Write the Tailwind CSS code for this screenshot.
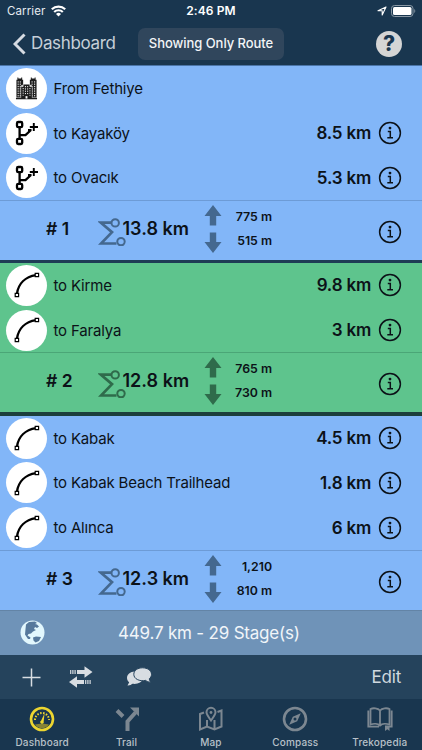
<!DOCTYPE html>
<html lang="en">
<head>
<meta charset="utf-8">
<title>Dashboard</title>
<script src="https://cdn.jsdelivr.net/npm/@tailwindcss/browser@4"></script>
</head>
<body class="w-[422px] h-[750px] overflow-hidden bg-[#19364f] font-['Inter','Liberation_Sans',sans-serif] antialiased">
<svg class="hidden">
  <symbol id="city" viewBox="0 0 24 24">
    <path d="M1.500 3.500h1V1h1v1h3V1h1v2.500h1V9H6.500v13h-5zM15.500 3.500h1V1h1v1h3V1h1v2.500h1V22h-5V9h-2z" fill="#1c1c1c"/>
    <path d="M3.300 5v16M5.500 5v16M17.800 5v16M20.500 5v16" stroke="#fff" stroke-width="1" stroke-dasharray="1.300 1.100"/>
    <path d="M6 10.500h2.500V8h7v2.500H18V23H6z" fill="#1c1c1c" stroke="#fff" stroke-width=".5"/>
    <path d="M8.500 12v8M10.900 10v9.500M13.200 10v9.500M15.600 12v8" stroke="#fff" stroke-width="1" stroke-dasharray="1.200 1.200"/>
    <path d="M1 23h22" stroke="#1c1c1c" stroke-width="1.500"/>
    <path d="M11 20.500h2V23h-2z" fill="#fff"/>
  </symbol>
  <symbol id="branch" viewBox="0 0 24 26">
    <g fill="none" stroke="#000" stroke-width="2.300">
      <rect x="2" y="2" width="5.200" height="5.200" rx="1.300"/><rect x="2" y="18.800" width="5.200" height="5.200" rx="1.300"/>
      <path d="M4.600 7v12M4.600 15.200H10.500l5.500-5.200M13 10.200h3.500"/><path d="M18.800 3v8M14.800 7h8.200" stroke-width="1.900"/>
    </g>
  </symbol>
  <symbol id="curve" viewBox="0 0 26 26">
    <path d="M3 21.500C4.500 12 11 4.800 22 3.200" fill="none" stroke="#000" stroke-width="2.300"/>
    <path d="M1.200 21.300h3.400v3.400H1.200zM21.200 1.300h3.400v3.400h-3.400z" fill="#fff" stroke="#000" stroke-width="1.200"/>
  </symbol>
  <symbol id="info" viewBox="0 0 24 24">
    <circle cx="12" cy="12" r="10.400" fill="none" stroke="currentColor" stroke-width="1.500"/>
    <path d="M9.800 10.400h2.500v6.300M9.300 16.800h5.700" fill="none" stroke="currentColor" stroke-width="1.500"/><circle cx="12" cy="7.100" r="1.400" fill="currentColor"/>
  </symbol>
  <symbol id="sigma" viewBox="0 0 28 28">
    <g fill="none" stroke="currentColor" stroke-width="2"><path d="M13.500 4.700H3L14 14.200 3 25.500H18.500" stroke-width="2.700"/><circle cx="17.200" cy="4.900" r="3.700"/><circle cx="23" cy="23.600" r="3.700"/></g>
  </symbol>
  <symbol id="up" viewBox="0 0 18 21"><path d="M9 0l8.500 11h-5.300v9.500H5.800V11H.5z" fill="currentColor"/></symbol>
</svg>

<header class="h-[66px] border-b border-[#4a75a8]">
  <div class="h-[22px] grid grid-cols-3 text-white text-[11.500px] leading-[22px]">
    <div class="flex items-center pl-[7px] gap-[6px]"><span class="tracking-[0.100px] text-[#e6ebef]">Carrier</span>
      <svg class="w-[15px] h-[12px]" viewBox="0 0 15 12"><g fill="none" stroke="#fff" stroke-width="2.200"><path d="M.8 4.300a9.500 9.500 0 0 1 13.400 0M3.200 7a6.100 6.100 0 0 1 8.600 0"/></g><path d="M7.500 11.500L5 8.900a3.600 3.600 0 0 1 5 0z" fill="#fff"/></svg></div>
    <div class="text-center font-semibold text-[12px] tracking-[0.100px]">2:46 PM</div>
    <div class="flex items-center justify-end pr-[6px] gap-[4px]">
      <svg class="w-[10px] h-[10px]" viewBox="0 0 10 10"><path d="M9 1L1 4.800h4.200V9z" fill="none" stroke="#fff" stroke-width="1.100" stroke-linejoin="round"/></svg>
      <svg class="w-[25px] h-[12px]" viewBox="0 0 25 12"><rect x=".5" y=".5" width="21.500" height="11" rx="3" fill="none" stroke="#8998a5"/><rect x="2" y="2" width="18.500" height="8" rx="1.500" fill="#fff"/><path d="M23.300 4v4c1.300-.5 1.300-3.500 0-4z" fill="#8998a5"/></svg>
    </div>
  </div>
  <div class="h-[43px] flex items-center pl-[13px] pr-[20px]">
    <svg class="w-[13px] h-[22px]" viewBox="0 0 13 22"><path d="M11.500 1.500L2 11l9.500 9.500" fill="none" stroke="#d6dbe2" stroke-width="3"/></svg>
    <span class="ml-[5px] w-[107px] text-[17px] tracking-[-0.350px] text-[#c6cfd8] whitespace-nowrap">Dashboard</span>
    <span class="w-[146px] h-[32px] rounded-[7px] bg-[#30465c] text-[#f3f5f7] text-[13px] tracking-[-0.050px] font-medium flex items-center justify-center whitespace-nowrap">Showing Only Route</span>
    <span class="ml-auto w-[26px] h-[26px] rounded-full bg-[#d5d5d5] text-[#19364f] text-[21px] font-extrabold flex items-center justify-center">?</span>
  </div>
</header>
<main id="list" class="h-[543.500px] bg-[#82b6f8] text-[#0c1218]"></main>
<section class="h-[45.500px] bg-[#6f93b8] border-t border-[#6384a6] flex items-center pl-[20px]">
  <svg class="w-[25px] h-[25px]" viewBox="0 0 25 25"><circle cx="12.500" cy="12.500" r="12" fill="#e2f7fd"/><path d="M6 4.500l3-2.500 6-.5 2 1.500-2 1 2 .5 2 2-2 1.500-2-1-1 2 2 1-3 1.500-2 2-2.500.5-1 1.500 1.500 1 1.500 1-.5 1.500H8L5 14.500 5.500 9zM13 17.500l3-1 5 .5-2 4-3.500 1.500-2-2z" fill="#56799c"/></svg>
  <span class="ml-[73px] pt-[2px] text-[17px] tracking-[-0.200px] text-[#f1f5f9] whitespace-nowrap">449.7 km - 29 Stage(s)</span>
</section>
<section class="h-[44px] bg-[#25435c] flex items-center pl-[22px] pr-[21px]">
  <svg class="w-[19px] h-[19px]" viewBox="0 0 19 19"><path d="M9.500 .5v18M.5 9.500h18" stroke="#d8dde2" stroke-width="1.500"/></svg>
  <svg class="ml-[27px] w-[25px] h-[22px]" viewBox="0 0 25 22" fill="#d8dde2"><path d="M9 4H16.500V.3l8 5.700-8 5.700V8H9zM16 14H9v-3.700L1 16l8 5.700V18h7z"/><path d="M2.700 4v4M4.900 4v4M7.100 4v4M17.700 14v4M19.900 14v4M22.100 14v4" stroke="#d8dde2" stroke-width="1.200"/></svg>
  <svg class="ml-[33px] w-[26px] h-[20px]" viewBox="0 0 26 20"><path d="M9 4.500C4 4.500 1 7.500 1 11c0 2 1 3.300 2.200 4.200L1.500 18.500c2 .2 4-.8 5-1.700 5 .8 9.500-1.500 10.500-5" fill="#d8dde2"/><path d="M16.500 .8c5 0 9 2.700 9 6.500 0 2-1 3.600-2.300 4.600l1.300 3.300c-2 0-3.700-.7-4.700-1.800-6.500 1.300-12-1.600-12-6.100 0-3.800 4-6.500 8.700-6.500z" fill="#d8dde2" stroke="#25435c"/></svg>
  <span class="ml-auto pt-[2px] text-[17px] tracking-[-0.200px] text-[#d0d8df]">Edit</span>
</section>
<nav class="h-[51px] bg-[#19364f] grid grid-cols-5 text-[10px] font-medium text-[#b8c1c9] leading-[12px] tracking-[0.150px]">
  <a class="flex flex-col items-center pt-[7px] gap-[4px]"><svg class="w-[26px] h-[26px]" viewBox="0 0 26 26"><circle cx="13" cy="13" r="11" fill="none" stroke="#ecd530" stroke-width="2.600"/><path d="M6 14a7 7 0 0 1 14 0" fill="none" stroke="#ecd530" stroke-width="2" stroke-dasharray="1.500 1.500"/><path d="M15.500 7.500l-.8 8a1.800 1.800 0 1 1-2.500-1z" fill="#ecd530"/><path d="M6 18.500c4-1 10-1 14 0-3 5-11 5-14 0z" fill="#878335"/></svg><span>Dashboard</span></a>
  <a class="flex flex-col items-center pt-[7px] gap-[4px]"><svg class="w-[26px] h-[26px]" viewBox="0 0 26 26"><path d="M13.500 25V15.500l8-9M3 4.500l6 6" fill="none" stroke="#7c8791" stroke-width="4"/><path d="M16 1.500h9v9z" fill="#7c8791"/></svg><span>Trail</span></a>
  <a class="flex flex-col items-center pt-[7px] gap-[4px]"><svg class="w-[26px] h-[26px]" viewBox="0 0 26 26"><g fill="none" stroke="#7c8791" stroke-width="2"><path d="M6 6.500L2 8v15.500l7-3 7.500 3 7-3V4.500l-4 1.500M9 14v6.500M16.500 14v9.500"/><path d="M13 14.500c-3-4-4.500-6-4.500-8.200a4.500 4.500 0 0 1 9 0c0 2.200-1.500 4.200-4.500 8.200z"/></g><circle cx="13" cy="6.500" r="1.400" fill="#7c8791"/></svg><span>Map</span></a>
  <a class="flex flex-col items-center pt-[7px] gap-[4px]"><svg class="w-[26px] h-[26px]" viewBox="0 0 26 26"><circle cx="13" cy="13" r="11" fill="none" stroke="#7c8791" stroke-width="2.600"/><path d="M18.800 7.200l-3.600 8-8 3.600 3.600-8z" fill="#7c8791"/><circle cx="13" cy="13" r="1.500" fill="#19364f"/></svg><span>Compass</span></a>
  <a class="flex flex-col items-center pt-[7px] gap-[4px]"><svg class="w-[26px] h-[26px]" viewBox="0 0 26 26"><path d="M13 4.500c-2-2.500-7-2.800-9.500-1.500V18.500c3-1 7.500-1 9.500 1 2-2 6.500-2 9.500-1V3C20 1.700 15 2 13 4.500zM13 4.500v15M1.300 4.500v16.200H12M24.700 4.500v16.200H22" fill="none" stroke="#7c8791" stroke-width="1.800"/><path d="M18 19.500h4.500v5.500l-2.200-1.800L18 25z" fill="#7c8791"/></svg><span>Trekopedia</span></a>
</nav>
<script>
const groups = [
  {bg: 'bg-[#82b6f8]', ink: 'text-[#44688f]', line: 'border-[#6d9bd6]', band: 'h-[3px] bg-[#1e3c55]', rows: [['city', 'From Fethiye', ''], ['branch', 'to Kayaköy', '8.5 km'], ['branch', 'to Ovacık', '5.3 km']], n: 1, total: '13.8 km', up: '775 m', down: '515 m'},
  {bg: 'bg-[#5ec48d]', ink: 'text-[#2f6b4b]', line: 'border-[#4ba677]', band: 'h-[3.500px] bg-[#1c3f3c]', rows: [['curve', 'to Kirme', '9.8 km'], ['curve', 'to Faralya', '3 km']], n: 2, total: '12.8 km', up: '765 m', down: '730 m'},
  {bg: 'bg-[#82b6f8]', ink: 'text-[#44688f]', line: 'border-[#6d9bd6]', band: 'h-0', rows: [['curve', 'to Kabak', '4.5 km'], ['curve', 'to Kabak Beach Trailhead', '1.8 km'], ['curve', 'to Alınca', '6 km']], n: 3, total: '12.3 km', up: '1,210', down: '810 m'}
];
const info = '<svg class="w-[24px] h-[24px] shrink-0 text-[#0c1218]"><use href="#info"/></svg>';
const sizes = {city: 'w-[23px] h-[26px]', branch: 'w-[24px] h-[26px]', curve: 'w-[26px] h-[26px]'};
document.getElementById('list').innerHTML = groups.map(g => `
  <section class="${g.bg}">
    ${g.rows.map(([icon, name, km]) => `
    <div class="h-[44.700px] flex items-center pl-[6px] pr-[20.500px]">
      <span class="w-[41px] h-[41px] rounded-full bg-white flex items-center justify-center shrink-0"><svg class="${sizes[icon]}"><use href="#${icon}"/></svg></span>
      <span class="ml-[6.500px] pt-[1.500px] text-[15px] tracking-[-0.180px] whitespace-nowrap">${name}</span>
      <span class="ml-auto mr-[6.500px] pt-[1.500px] text-[17px] tracking-[-0.200px] font-semibold whitespace-nowrap">${km}</span>${km ? info : ''}
    </div>`).join('')}
    <div class="h-[60px] border-t ${g.line} flex items-start pl-[46px] pr-[20.500px] font-semibold whitespace-nowrap">
      <span class="w-[52px] pt-[16.500px] text-[17.500px] leading-[22px]"># ${g.n}</span>
      <svg class="mt-[17px] w-[28px] h-[28px] shrink-0 ${g.ink}"><use href="#sigma"/></svg>
      <span class="-ml-[3.500px] w-[81.500px] pt-[16.500px] text-[18px] leading-[22px]">${g.total}</span>
      <span class="pt-[4px] flex flex-col gap-[6px] ${g.ink}"><svg class="w-[18px] h-[21px]"><use href="#up"/></svg><svg class="w-[18px] h-[21px] rotate-180"><use href="#up"/></svg></span>
      <span class="w-[50px] pt-[7.500px] flex flex-col gap-[8px] text-right text-[12.300px] leading-[16px]"><span>${g.up}</span><span>${g.down}</span></span>
      <span class="ml-auto pt-[19px]">${info}</span>
    </div>
  </section>
  <div class="${g.band}"></div>`).join('');
</script>
</body>
</html>
